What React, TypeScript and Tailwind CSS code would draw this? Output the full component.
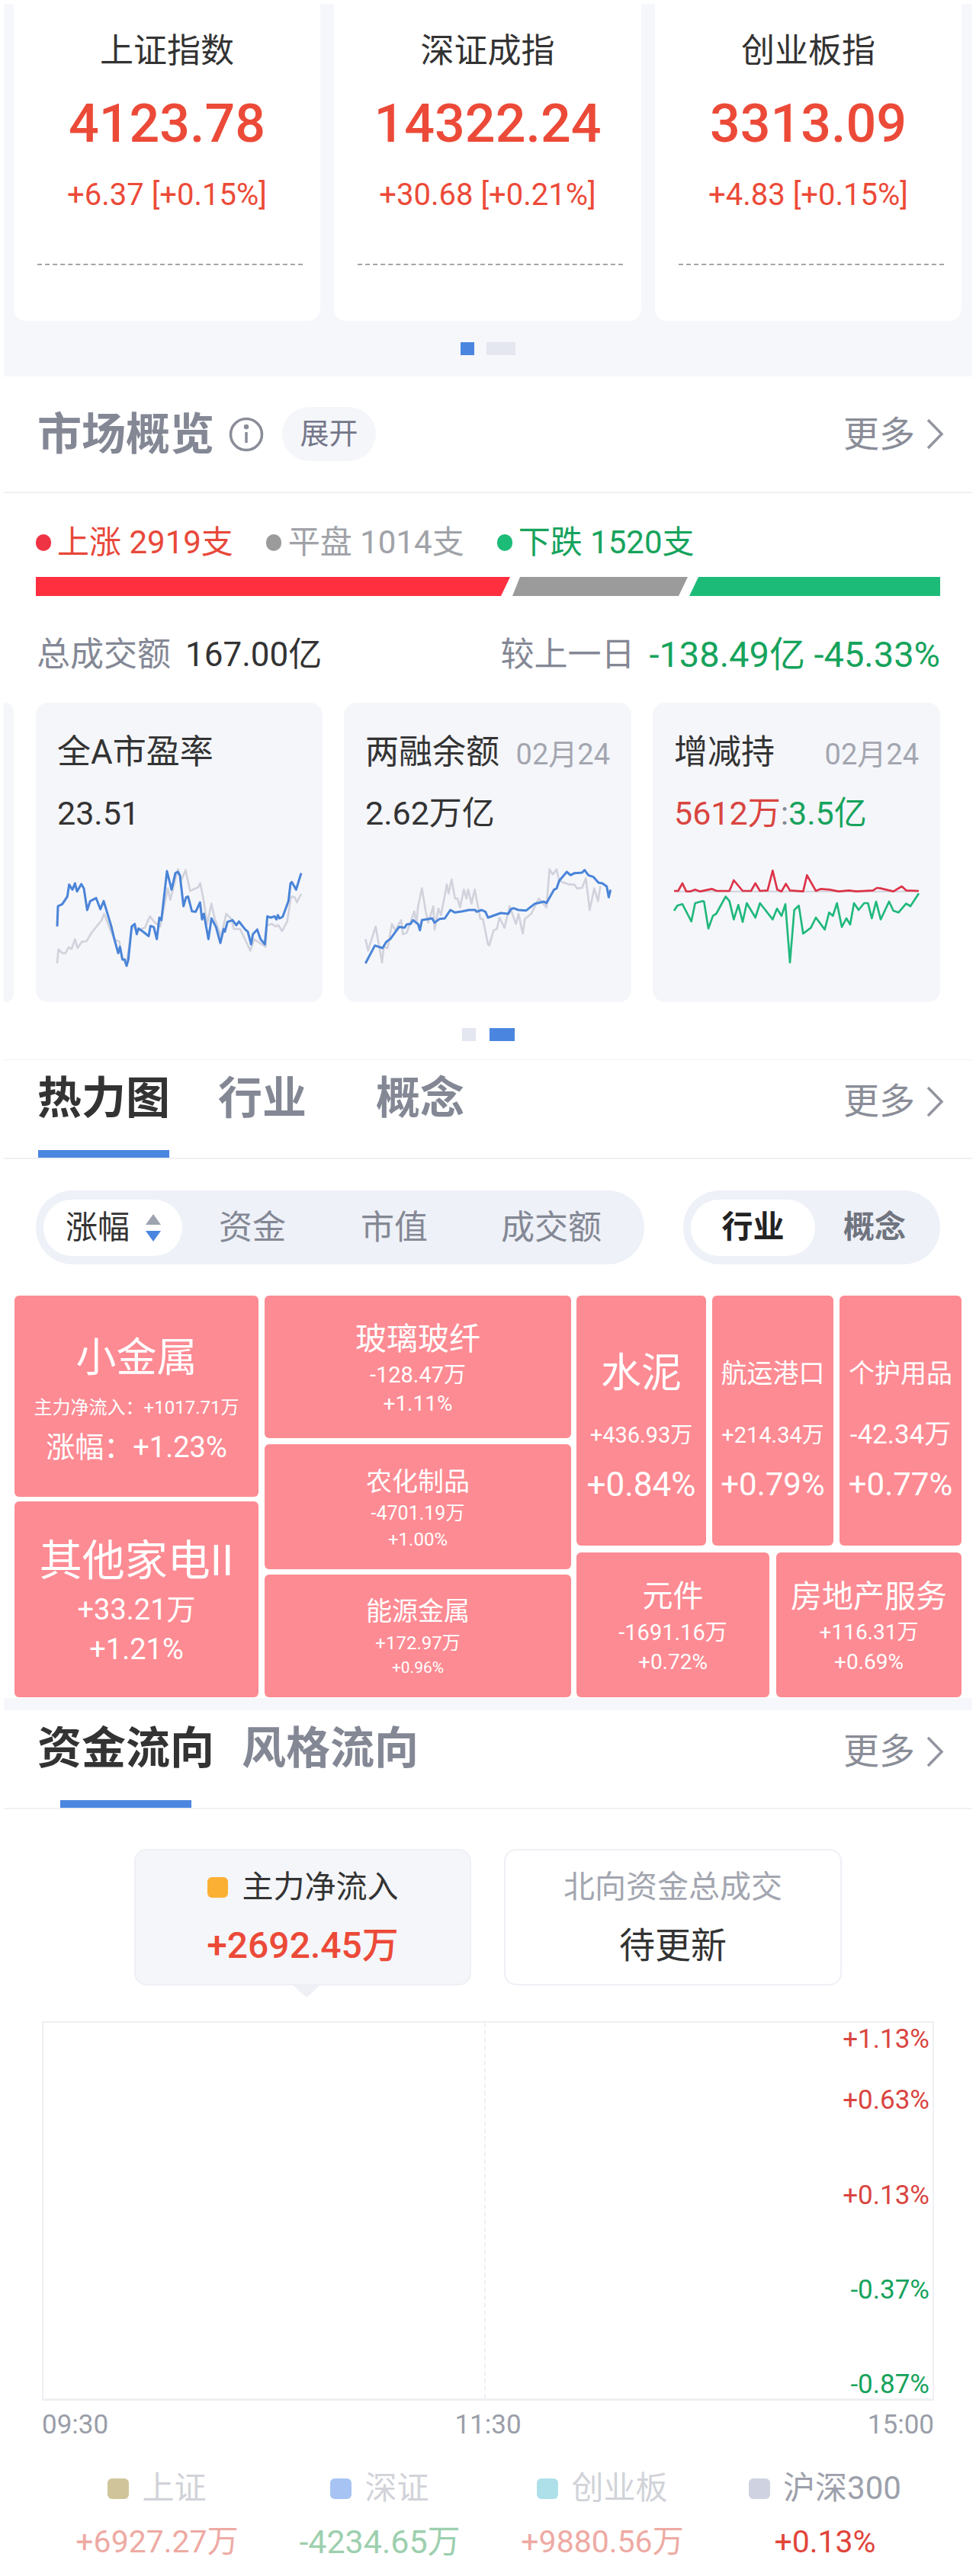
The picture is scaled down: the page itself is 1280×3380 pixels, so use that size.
import React from "react";

const blue1 = "165,350 168,270 185,262 205,232 212,185 225,205 235,180 243,212 260,183 270,200 283,285 295,250 318,238 335,282 348,250 378,350 390,400 405,455 412,430 422,480 430,480 438,505 445,480 458,350 470,340 478,380 485,358 505,372 525,388 532,348 545,352 557,400 567,315 575,325 597,132 615,205 630,140 640,135 648,150 662,270 672,235 680,232 695,290 710,292 727,255 735,322 742,300 760,400 772,318 790,352 807,415 820,360 825,370 835,332 855,325 870,345 880,330 905,362 915,370 928,420 935,380 952,362 965,400 982,420 992,310 1005,315 1020,310 1028,322 1033,305 1040,318 1052,312 1075,250 1083,180 1088,175 1105,205 1125,140";
const gray1 = "165,495 170,440 185,455 198,455 210,432 222,438 235,400 245,435 262,410 280,408 300,375 320,350 340,325 350,300 375,365 390,400 410,410 420,480 440,480 460,350 480,365 510,355 530,310 545,330 570,350 600,200 610,245 640,125 655,165 670,128 688,210 710,200 720,195 728,180 740,240 755,340 772,260 785,320 810,390 830,300 850,320 860,360 885,360 925,445 940,400 985,430 990,345 1010,340 1025,350 1035,345 1050,368 1070,330 1085,232 1100,235 1108,255 1125,222";
const blue2 = "118,495 155,425 185,435 200,410 215,400 250,352 272,355 280,342 295,340 305,325 325,340 332,365 340,325 380,318 390,335 410,320 430,318 452,285 470,295 500,290 525,285 550,285 555,292 575,285 590,292 600,315 650,297 680,300 690,282 700,278 720,285 750,287 785,260 820,252 830,258 860,205 870,200 880,170 910,135 925,148 940,140 970,138 980,128 995,148 1015,155 1035,178 1050,180 1067,192 1075,235 1082,205";
const gray2 = "118,400 128,445 158,350 183,492 190,430 205,435 222,340 235,365 258,325 265,380 280,375 310,290 318,340 325,270 340,200 355,290 365,335 385,270 390,362 405,280 415,305 438,185 445,220 457,165 470,240 480,240 490,275 505,205 515,240 522,205 535,260 548,205 570,320 580,320 600,420 605,425 622,365 635,360 645,315 665,355 685,270 710,340 720,300 737,378 745,320 770,300 800,240 830,275 842,125 855,145 870,125 880,170 920,185 940,185 950,200 970,198 985,160 1000,285 1018,200 1033,250 1042,190";
const red3 = "102,210 118,210 135,180 150,212 165,212 185,205 205,212 250,202 270,210 320,210 337,168 372,210 405,210 422,180 440,210 470,208 490,130 508,205 525,212 542,182 558,208 610,212 625,148 660,210 680,202 715,205 750,212 790,208 820,212 885,208 900,198 915,200 965,212 998,192 1015,208 1065,210";
const green3 = "102,288 115,268 135,262 170,330 185,258 215,250 220,252 237,358 255,308 268,300 305,232 320,250 337,322 355,265 372,332 388,258 422,315 440,258 490,322 507,280 525,308 540,262 558,492 575,285 593,268 610,378 640,355 660,315 695,362 712,295 727,308 743,258 762,352 780,318 795,342 810,258 828,285 850,258 865,258 880,318 897,252 915,322 948,252 965,288 985,295 1015,260 1032,270 1065,220";

function More() {
  return (
    <div className="flex items-center gap-[14px] text-[#8a8d98]">
      <span className="text-[47px] leading-[60px]">更多</span>
      <svg width="25" height="41" viewBox="0 0 25 41" fill="none" stroke="#92959f" strokeWidth="3.5">
        <polyline points="3,2 21,20.5 3,39" />
      </svg>
    </div>
  );
}

function IndexCard({ name, value, change, width }: { name: string; value: string; change: string; width: string }) {
  return (
    <div className={`${width} h-[416px] bg-white rounded-b-2xl flex flex-col items-center`}>
      <div className="mt-[32px] text-[44px] leading-[60px] text-[#333333]">{name}</div>
      <div className="mt-[23px] text-[70px] leading-[84px] font-medium text-[#ec4a38]">{value}</div>
      <div className="mt-[28px] text-[40px] leading-[48px] text-[#ec4a38]">{change}</div>
      <div className="mt-[66px] self-start ml-[31px] w-[348px] border-t-2 border-dashed border-[#a5a5a5]" />
    </div>
  );
}

function Tabs({ children }: { children: React.ReactNode }) {
  return (
    <div className="h-[130px] border-b-2 border-[#eef0f3] flex justify-between pl-[44px] pr-[36px]">
      <div className="flex h-full">{children}</div>
      <div className="pt-[24px]"><More /></div>
    </div>
  );
}

function Tab({ label, active, cls }: { label: string; active?: boolean; cls: string }) {
  return (
    <div className={`${cls} flex flex-col justify-between h-full`}>
      <div className={`pt-[18px] text-[58px] leading-[64px] font-bold ${active ? "text-[#333333]" : "text-[#848895]"}`}>{label}</div>
      {active ? <div className="h-[10px] w-[172px] self-center bg-[#4a86e0]" /> : null}
    </div>
  );
}

function Cell({ cls, children }: { cls: string; children: React.ReactNode }) {
  return (
    <div className={`${cls} rounded-[6px] bg-[#fd8b93] text-white flex flex-col items-center whitespace-nowrap`}>
      {children}
    </div>
  );
}

function MiniCard({ title, date, value, box, children, w }: { title: string; date?: string; value: React.ReactNode; box: string; children: React.ReactNode; w: string }) {
  return (
    <div className={`${w} h-[393px] rounded-2xl bg-[#f5f6fa] flex flex-col`}>
      <div className="mt-[37px] h-[56px] px-[28px] flex justify-between items-center">
        <span className="text-[44px] leading-[56px] text-[#333333]">{title}</span>
        {date ? <span className="text-[38px] leading-[44px] mt-[6px] text-[#a3a6b0]">{date}</span> : null}
      </div>
      <div className="mt-[26px] h-[56px] px-[28px] text-[43px] leading-[52px] text-[#333333]">{value}</div>
      <svg className="mt-auto block" width="100%" height="216" viewBox={box} fill="none" strokeLinejoin="round">
        {children}
      </svg>
    </div>
  );
}

function LegendItem({ dot, label, labelCls, value, valueCls }: { dot: string; label: string; labelCls: string; value: string; valueCls: string }) {
  return (
    <div className="flex flex-col items-center">
      <div className="flex items-center gap-[17px] h-[56px]">
        <span className={`${dot} w-[28px] h-[27px] rounded-md`} />
        <span className={`${labelCls} text-[42px] leading-[56px]`}>{label}</span>
      </div>
      <div className={`${valueCls} mt-[14px] leading-[56px]`}>{value}</div>
    </div>
  );
}

export default function App() {
  return (
    <div className="w-[1280px] h-[3380px] overflow-hidden bg-white px-[5px] [font-family:Roboto,'Noto_Sans_CJK_SC',sans-serif]">
      {/* index cards */}
      <section className="mt-[5px] h-[489px] bg-[#f6f7fb] pl-[13px]">
        <div className="flex gap-[18px]">
          <IndexCard width="w-[402px]" name="上证指数" value="4123.78" change="+6.37 [+0.15%]" />
          <IndexCard width="w-[403px]" name="深证成指" value="14322.24" change="+30.68 [+0.21%]" />
          <IndexCard width="w-[402px]" name="创业板指" value="3313.09" change="+4.83 [+0.15%]" />
        </div>
        <div className="mt-[28px] -ml-[13px] flex justify-center gap-[16px]">
          <span className="w-[18px] h-[17px] bg-[#4a86e0]" />
          <span className="w-[38px] h-[17px] bg-[#e4e6f0]" />
        </div>
      </section>

      {/* market overview */}
      <section className="h-[153px] border-b-2 border-[#eef0f3] flex items-center justify-between pl-[44px] pr-[36px]">
        <div className="flex items-center">
          <span className="text-[58px] leading-[64px] font-bold text-[#848895]">市场概览</span>
          <svg className="ml-[19px]" width="46" height="46" viewBox="0 0 46 46" fill="none" stroke="#8a8d98" strokeWidth="3.5">
            <circle cx="23" cy="23" r="20.5" />
            <line x1="23" y1="20" x2="23" y2="34" />
            <circle cx="23" cy="13" r="1.5" fill="#8a8d98" />
          </svg>
          <span className="ml-[24px] w-[123px] h-[71px] rounded-[36px] bg-[#f5f6fa] flex items-center justify-center text-[38px] text-[#74778a]">展开</span>
        </div>
        <More />
      </section>

      <section>
        <div className="mt-[37px] ml-[42px] flex items-center text-[42px] leading-[56px] whitespace-nowrap">
          <span className="w-[20px] h-[22px] rounded-full bg-[#f03344]" />
          <span className="ml-[8px] text-[#e8483a]">上涨 2919支</span>
          <span className="ml-[43px] w-[20px] h-[22px] rounded-full bg-[#9b9b9b]" />
          <span className="ml-[9px] text-[#a0a2a8]">平盘 1014支</span>
          <span className="ml-[43px] w-[20px] h-[22px] rounded-full bg-[#1dbb78]" />
          <span className="ml-[8px] text-[#16a35c]">下跌 1520支</span>
        </div>
        <svg className="mt-[17px] ml-[42px] block" width="1186" height="25" viewBox="0 0 1186 25">
          <polygon points="0,0 622,0 610,25 0,25" fill="#ff2f3f" />
          <polygon points="635,0 855,0 843,25 625,25" fill="#9b9b9b" />
          <polygon points="869,0 1186,0 1186,25 857,25" fill="#1dbb78" />
        </svg>
        <div className="mt-[49px] h-[56px] pl-[43px] pr-[42px] flex justify-between items-center leading-[56px] whitespace-nowrap">
          <div className="flex items-center">
            <span className="text-[44px] text-[#848895]">总成交额</span>
            <span className="ml-[19px] text-[44px] text-[#333333]">167.00亿</span>
          </div>
          <div className="flex items-center">
            <span className="text-[44px] text-[#848895]">较上一日</span>
            <span className="ml-[19px] text-[47px] text-[#16a35c]">-138.49亿 -45.33%</span>
          </div>
        </div>
        <div className="mt-[35px] flex">
          <div className="w-[13px] h-[393px] rounded-r-xl bg-[#f5f6fa]" />
          <div className="ml-[29px] flex gap-[28px]">
            <MiniCard w="w-[376px]" title="全A市盈率" value="23.51" box="81 0 1128 648">
              <polyline points={gray1} stroke="#d1d2dc" strokeWidth="8" />
              <polyline points={blue1} stroke="#4a84d8" strokeWidth="9" />
            </MiniCard>
            <MiniCard w="w-[377px]" title="两融余额" date="02月24" value="2.62万亿" box="33 0 1131 648">
              <polyline points={gray2} stroke="#d1d2dc" strokeWidth="8" />
              <polyline points={blue2} stroke="#4a84d8" strokeWidth="9" />
            </MiniCard>
            <MiniCard
              w="w-[377px]"
              title="增减持"
              date="02月24"
              box="18 0 1131 648"
              value={
                <>
                  <span className="text-[#d9453f]">5612万</span>
                  <span className="text-[#848895]">:</span>
                  <span className="text-[#16a35c]">3.5亿</span>
                </>
              }
            >
              <line x1="102" y1="212" x2="1065" y2="212" stroke="#d1d2dc" strokeWidth="6" />
              <polyline points={green3} stroke="#1fb87c" strokeWidth="8" />
              <polyline points={red3} stroke="#dc3448" strokeWidth="8" />
            </MiniCard>
          </div>
        </div>
        <div className="mt-[34px] flex justify-center gap-[18px]">
          <span className="w-[18px] h-[17px] bg-[#e4e6f0]" />
          <span className="w-[33px] h-[17px] bg-[#4a86e0]" />
        </div>
      </section>

      {/* heat map */}
      <section className="mt-[24px] border-t border-[#f0f1f4]">
        <Tabs>
          <Tab active label="热力图" cls="" />
          <Tab label="行业" cls="ml-[63px]" />
          <Tab label="概念" cls="ml-[91px]" />
        </Tabs>
        <div className="mt-[41px] pl-[42px] flex gap-[51px]">
          <div className="w-[798px] h-[97px] rounded-[48px] bg-[#eef1f7] flex items-center pl-[10px] text-[44px] text-[#848895] whitespace-nowrap">
            <div className="w-[182px] h-[74px] rounded-[37px] bg-white flex items-center pl-[29px] text-[#333333]">
              <span className="text-[42px]">涨幅</span>
              <svg className="ml-[21px]" width="20" height="36" viewBox="0 0 20 36">
                <polygon points="10,0 20,14 0,14" fill="#9ea3b0" />
                <polygon points="0,22 20,22 10,36" fill="#4a86e0" />
              </svg>
            </div>
            <span className="ml-[48px]">资金</span>
            <span className="ml-[98px]">市值</span>
            <span className="ml-[96px]">成交额</span>
          </div>
          <div className="w-[337px] h-[97px] rounded-[48px] bg-[#eef1f7] flex items-center pl-[10px] text-[41px] font-bold whitespace-nowrap">
            <div className="w-[163px] h-[74px] rounded-[37px] bg-white flex items-center justify-center text-[#222222]">行业</div>
            <span className="ml-[37px] text-[#70747f]">概念</span>
          </div>
        </div>
        <div className="mt-[41px] pl-[14px] flex gap-[8px] h-[527px]">
          <div className="w-[320px] flex flex-col gap-[6px]">
            <Cell cls="h-[264px] pt-[43px]">
              <p className="text-[53px] leading-[78px]">小金属</p>
              <p className="text-[24px] leading-[52px]">主力净流入：+1017.71万</p>
              <p className="text-[38px] leading-[52px]">涨幅：+1.23%</p>
            </Cell>
            <Cell cls="h-[257px] pt-[40px]">
              <p className="text-[56px] leading-[76px]">其他家电II</p>
              <p className="text-[38px] leading-[52px]">+33.21万</p>
              <p className="text-[38px] leading-[52px]">+1.21%</p>
            </Cell>
          </div>
          <div className="w-[402px] flex flex-col">
            <Cell cls="h-[187px] pt-[29px]">
              <p className="text-[41px] leading-[56px]">玻璃玻纤</p>
              <p className="text-[29px] leading-[38px]">-128.47万</p>
              <p className="text-[28px] leading-[38px]">+1.11%</p>
            </Cell>
            <Cell cls="mt-[8px] h-[164px] pt-[24px]">
              <p className="text-[34px] leading-[50px]">农化制品</p>
              <p className="text-[25px] leading-[34px]">-4701.19万</p>
              <p className="text-[24px] leading-[34px]">+1.00%</p>
            </Cell>
            <Cell cls="mt-[7px] h-[161px] pt-[22px]">
              <p className="text-[34px] leading-[52px]">能源金属</p>
              <p className="text-[24px] leading-[32px]">+172.97万</p>
              <p className="text-[21px] leading-[32px]">+0.96%</p>
            </Cell>
          </div>
          <div className="w-[505px] -ml-[1px] flex flex-col gap-[9px]">
            <div className="flex gap-[8px] h-[328px]">
              <Cell cls="w-[170px] pt-[52px]">
                <p className="text-[53px] leading-[100px]">水泥</p>
                <p className="text-[29px] leading-[62px]">+436.93万</p>
                <p className="text-[44px] leading-[68px]">+0.84%</p>
              </Cell>
              <Cell cls="w-[159px] pt-[52px]">
                <p className="text-[34px] leading-[100px]">航运港口</p>
                <p className="text-[29px] leading-[62px]">+214.34万</p>
                <p className="text-[42px] leading-[68px]">+0.79%</p>
              </Cell>
              <Cell cls="w-[160px] pt-[52px]">
                <p className="text-[34px] leading-[100px]">个护用品</p>
                <p className="text-[35px] leading-[62px]">-42.34万</p>
                <p className="text-[42px] leading-[68px]">+0.77%</p>
              </Cell>
            </div>
            <div className="flex gap-[9px] h-[190px]">
              <Cell cls="w-[253px] pt-[30px]">
                <p className="text-[40px] leading-[56px]">元件</p>
                <p className="text-[29px] leading-[38px]">-1691.16万</p>
                <p className="text-[28px] leading-[40px]">+0.72%</p>
              </Cell>
              <Cell cls="w-[243px] pt-[30px]">
                <p className="text-[41px] leading-[56px]">房地产服务</p>
                <p className="text-[28px] leading-[38px]">+116.31万</p>
                <p className="text-[28px] leading-[40px]">+0.69%</p>
              </Cell>
            </div>
          </div>
        </div>
        <div className="mt-[1px] h-[16px] bg-[#f6f7fb]" />
      </section>

      {/* money flow */}
      <section>
        <Tabs>
          <Tab active label="资金流向" cls="" />
          <Tab label="风格流向" cls="ml-[36px]" />
        </Tabs>
        <div className="mt-[52px] flex justify-center gap-[43px]">
          <div className="relative w-[442px] h-[179px] rounded-2xl bg-[#f5f6fa] border-2 border-[#eff0f5] flex flex-col items-center">
            <div className="mt-[20px] flex items-center gap-[19px]">
              <span className="w-[27px] h-[27px] rounded-[6px] bg-[#fbb034]" />
              <span className="text-[41px] leading-[56px] text-[#333333]">主力净流入</span>
            </div>
            <div className="mt-[17px] text-[48px] leading-[64px] font-medium text-[#ec4a38]">+2692.45万</div>
            <div className="absolute left-[204px] top-full w-[40px] h-[18px] bg-[#eff0f5] [clip-path:polygon(0_0,100%_0,50%_100%)]" />
          </div>
          <div className="w-[443px] h-[179px] rounded-2xl bg-white border-2 border-[#eff0f5] flex flex-col items-center">
            <div className="mt-[20px] text-[41px] leading-[56px] text-[#a3a6b0]">北向资金总成交</div>
            <div className="mt-[17px] text-[47px] leading-[64px] text-[#333333]">待更新</div>
          </div>
        </div>
        <div className="relative mt-[47px] ml-[50px] w-[1170px] h-[498px] border-x-2 border-t-2 border-b-[3px] border-[#eef0f3] flex flex-col items-end pr-[4px] text-[35px] leading-[44px] whitespace-nowrap">
          <div className="absolute left-[578px] top-0 bottom-0 border-l-2 border-dashed border-[#f0f1f4]" />
          <span className="text-[#d9453f]">+1.13%</span>
          <span className="mt-[36px] text-[#d9453f]">+0.63%</span>
          <span className="mt-[81px] text-[#d9453f]">+0.13%</span>
          <span className="mt-[80px] text-[#16a35c]">-0.37%</span>
          <span className="mt-[80px] text-[#16a35c]">-0.87%</span>
        </div>
        <div className="mt-[10px] ml-[50px] w-[1170px] flex justify-between text-[35px] leading-[44px] text-[#9a9ea9]">
          <span>09:30</span>
          <span>11:30</span>
          <span>15:00</span>
        </div>
        <div className="mt-[33px] ml-[55px] w-[1168px] grid grid-cols-4 whitespace-nowrap">
          <LegendItem dot="bg-[#d0c59a]" label="上证" labelCls="text-[#d1d3d9]" value="+6927.27万" valueCls="text-[41px] text-[#eeaaa3]" />
          <LegendItem dot="bg-[#a7c3f4]" label="深证" labelCls="text-[#d1d3d9]" value="-4234.65万" valueCls="text-[43px] text-[#9dcfae]" />
          <LegendItem dot="bg-[#aee0e9]" label="创业板" labelCls="text-[#d1d3d9]" value="+9880.56万" valueCls="text-[41px] text-[#eeaaa3]" />
          <LegendItem dot="bg-[#cfd2e0]" label="沪深300" labelCls="text-[#9da0ab]" value="+0.13%" valueCls="text-[41px] text-[#e0453a]" />
        </div>
      </section>
    </div>
  );
}
